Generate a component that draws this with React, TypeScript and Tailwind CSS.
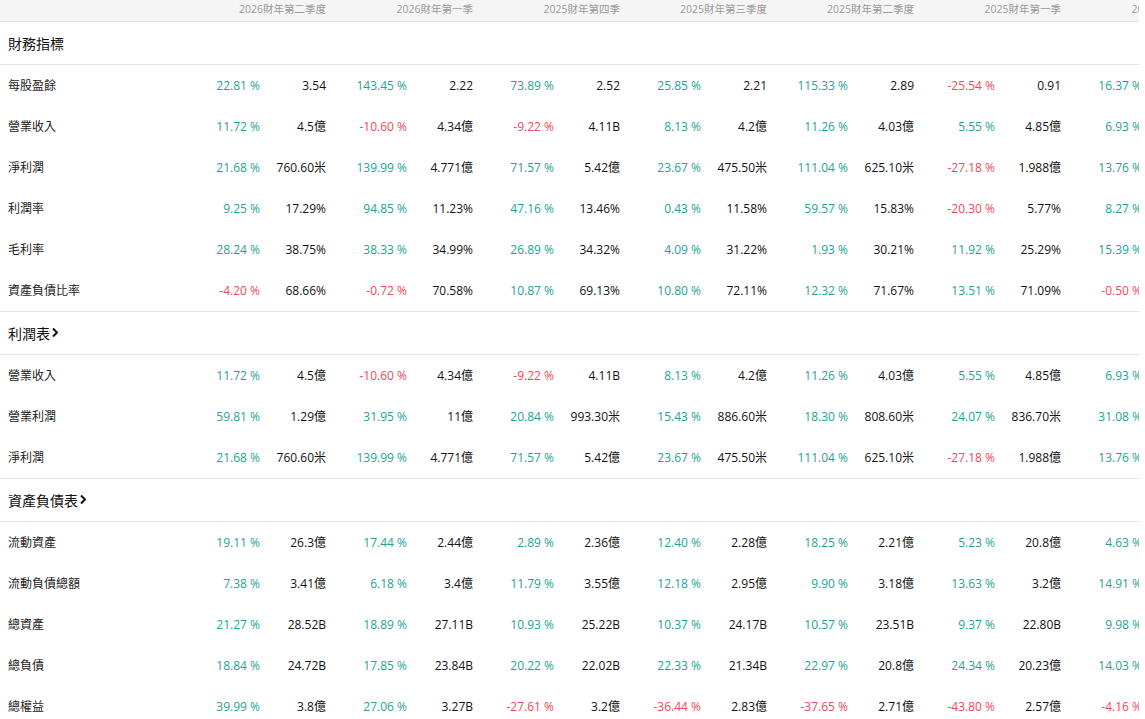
import React from "react";

type Cell = [string, string];
type Row = { label: string; cells: Cell[] };
type Section = { title: string; link?: boolean; rows: Row[] };

const quarters = [
  "2026財年第二季度",
  "2026財年第一季",
  "2025財年第四季",
  "2025財年第三季度",
  "2025財年第二季度",
  "2025財年第一季",
  "2024財年第四季",
];

const revenue: Row = {
  label: "營業收入",
  cells: [
    ["11.72 %", "4.5億"],
    ["-10.60 %", "4.34億"],
    ["-9.22 %", "4.11B"],
    ["8.13 %", "4.2億"],
    ["11.26 %", "4.03億"],
    ["5.55 %", "4.85億"],
    ["6.93 %", "4.58億"],
  ],
};

const netProfit: Row = {
  label: "淨利潤",
  cells: [
    ["21.68 %", "760.60米"],
    ["139.99 %", "4.771億"],
    ["71.57 %", "5.42億"],
    ["23.67 %", "475.50米"],
    ["111.04 %", "625.10米"],
    ["-27.18 %", "1.988億"],
    ["13.76 %", "3.16億"],
  ],
};

const sections: Section[] = [
  {
    title: "財務指標",
    rows: [
      {
        label: "每股盈餘",
        cells: [
          ["22.81 %", "3.54"],
          ["143.45 %", "2.22"],
          ["73.89 %", "2.52"],
          ["25.85 %", "2.21"],
          ["115.33 %", "2.89"],
          ["-25.54 %", "0.91"],
          ["16.37 %", "2.47"],
        ],
      },
      revenue,
      netProfit,
      {
        label: "利潤率",
        cells: [
          ["9.25 %", "17.29%"],
          ["94.85 %", "11.23%"],
          ["47.16 %", "13.46%"],
          ["0.43 %", "11.58%"],
          ["59.57 %", "15.83%"],
          ["-20.30 %", "5.77%"],
          ["8.27 %", "6.90%"],
        ],
      },
      {
        label: "毛利率",
        cells: [
          ["28.24 %", "38.75%"],
          ["38.33 %", "34.99%"],
          ["26.89 %", "34.32%"],
          ["4.09 %", "31.22%"],
          ["1.93 %", "30.21%"],
          ["11.92 %", "25.29%"],
          ["15.39 %", "27.04%"],
        ],
      },
      {
        label: "資產負債比率",
        cells: [
          ["-4.20 %", "68.66%"],
          ["-0.72 %", "70.58%"],
          ["10.87 %", "69.13%"],
          ["10.80 %", "72.11%"],
          ["12.32 %", "71.67%"],
          ["13.51 %", "71.09%"],
          ["-0.50 %", "71.02%"],
        ],
      },
    ],
  },
  {
    title: "利潤表",
    link: true,
    rows: [
      revenue,
      {
        label: "營業利潤",
        cells: [
          ["59.81 %", "1.29億"],
          ["31.95 %", "11億"],
          ["20.84 %", "993.30米"],
          ["15.43 %", "886.60米"],
          ["18.30 %", "808.60米"],
          ["24.07 %", "836.70米"],
          ["31.08 %", "9.12億"],
        ],
      },
      netProfit,
    ],
  },
  {
    title: "資產負債表",
    link: true,
    rows: [
      {
        label: "流動資產",
        cells: [
          ["19.11 %", "26.3億"],
          ["17.44 %", "2.44億"],
          ["2.89 %", "2.36億"],
          ["12.40 %", "2.28億"],
          ["18.25 %", "2.21億"],
          ["5.23 %", "20.8億"],
          ["4.63 %", "19.9億"],
        ],
      },
      {
        label: "流動負債總額",
        cells: [
          ["7.38 %", "3.41億"],
          ["6.18 %", "3.4億"],
          ["11.79 %", "3.55億"],
          ["12.18 %", "2.95億"],
          ["9.90 %", "3.18億"],
          ["13.63 %", "3.2億"],
          ["14.91 %", "3.21億"],
        ],
      },
      {
        label: "總資產",
        cells: [
          ["21.27 %", "28.52B"],
          ["18.89 %", "27.11B"],
          ["10.93 %", "25.22B"],
          ["10.37 %", "24.17B"],
          ["10.57 %", "23.51B"],
          ["9.37 %", "22.80B"],
          ["9.98 %", "21.93B"],
        ],
      },
      {
        label: "總負債",
        cells: [
          ["18.84 %", "24.72B"],
          ["17.85 %", "23.84B"],
          ["20.22 %", "22.02B"],
          ["22.33 %", "21.34B"],
          ["22.97 %", "20.8億"],
          ["24.34 %", "20.23億"],
          ["14.03 %", "19.69億"],
        ],
      },
      {
        label: "總權益",
        cells: [
          ["39.99 %", "3.8億"],
          ["27.06 %", "3.27B"],
          ["-27.61 %", "3.2億"],
          ["-36.44 %", "2.83億"],
          ["-37.65 %", "2.71億"],
          ["-43.80 %", "2.57億"],
          ["-4.16 %", "2.26億"],
        ],
      },
    ],
  },
];

const Chevron = () => (
  <svg width="8" height="11" viewBox="0 0 8 11" className="ml-[1px] mb-[1px]">
    <path
      d="M2 1.5 L6 5.5 L2 9.5"
      fill="none"
      stroke="#111"
      strokeWidth="2"
      strokeLinejoin="miter"
    />
  </svg>
);

const App = () => {
  return (
    <div
      className="w-[1145px] h-[719px] overflow-hidden bg-white text-[#111]"
      style={{ fontFamily: '"Open Sans", "Noto Sans CJK TC", sans-serif' }}>
      {/* table viewport, scrolls sideways in the real page */}
      <div className="w-[1139px] h-full overflow-hidden">
        <div className="w-[1208px]">
          <div className="flex h-[22px] bg-[#f5f5f5] border-b border-[#e2e2ea]">
            <div className="w-[179px] shrink-0" />
            {quarters.map((q) => (
              <div
                key={q}
                className="w-[147px] shrink-0 text-right text-[10.5px] leading-[16px] pt-[1px] text-[#9a9a9a]">
                {q}
              </div>
            ))}
          </div>

          {sections.map((section) => (
            <div key={section.title} className="border-b border-[#e2e2ea]">
              <div className="flex items-center h-[43px] pl-2 border-b border-[#e2e2ea] text-[14px] text-[#111]">
                <span>{section.title}</span>
                {section.link && <Chevron />}
              </div>
              {section.rows.map((row) => (
                <div key={row.label} className="flex items-center h-[41px] text-[12px]">
                  <div className="w-[179px] shrink-0 pl-2 text-[#222]">
                    {row.label}
                  </div>
                  {row.cells.map(([pct, val], i) => (
                    <div key={i} className="flex w-[147px] shrink-0">
                      <div
                        className={
                          "w-[81px] text-right " +
                          (pct.startsWith("-") ? "text-[#f4465a]" : "text-[#1ea397]")
                        }>
                        {pct}
                      </div>
                      <div className="w-[66px] text-right text-[#111]">{val}</div>
                    </div>
                  ))}
                </div>
              ))}
            </div>
          ))}
        </div>
      </div>
    </div>
  );
};

export default App;
